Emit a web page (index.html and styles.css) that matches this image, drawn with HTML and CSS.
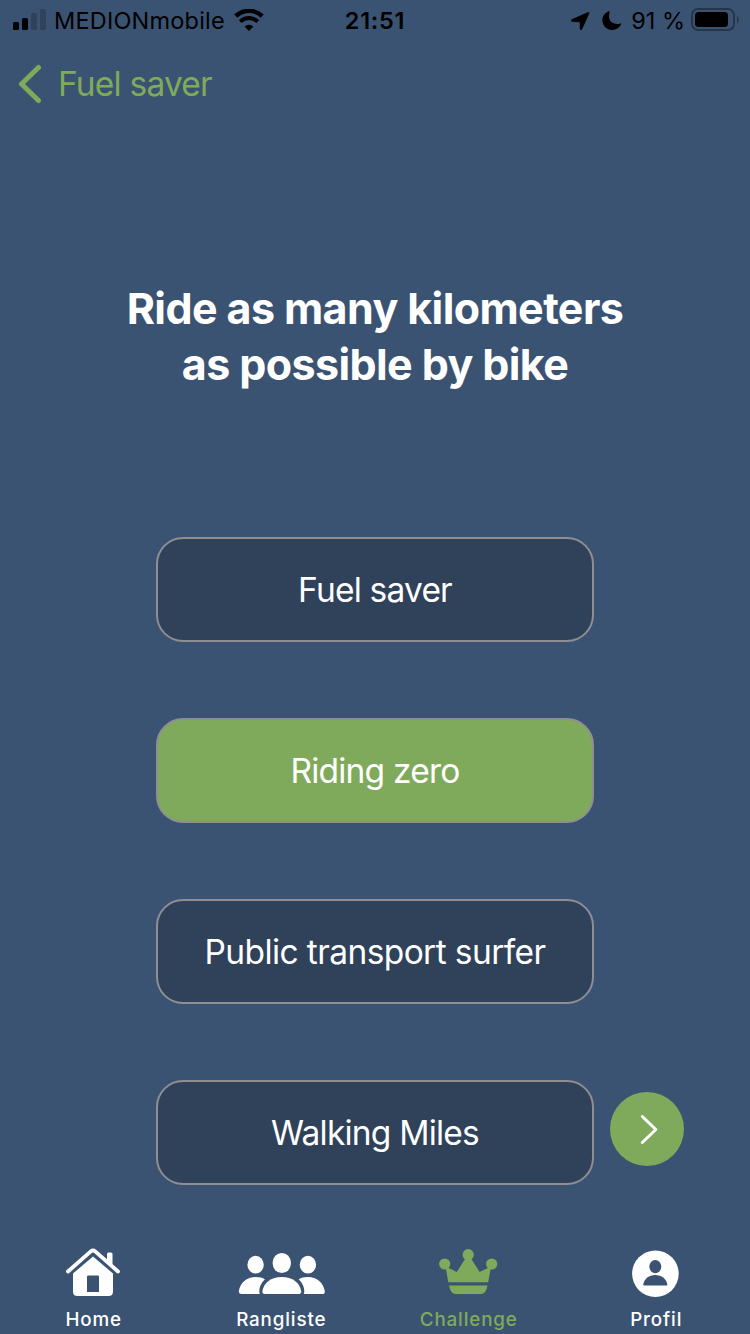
FILE: index.html
```html
<!DOCTYPE html>
<html lang="en">
<head>
    <meta charset="UTF-8">
    <meta name="viewport" content="width=device-width, initial-scale=1.0">
    <title>Challenge</title>
    <link rel="stylesheet" href="styles.css">
</head>
<body>
    <div class="statusbar">
        <div class="status-left">
            <svg class="signal" width="34" height="22" viewBox="0 0 34 22">
                <rect x="0" y="13" width="6" height="8" rx="1.5"/>
                <rect x="9" y="9" width="6" height="12" rx="1.5"/>
                <rect x="18" y="4" width="6" height="17" rx="1.5" fill="#2f425a"/>
                <rect x="27" y="0" width="6" height="21" rx="1.5" fill="#2f425a"/>
            </svg>
            <span class="carrier">MEDIONmobile</span>
            <svg class="wifi" width="30" height="22" viewBox="0 0 30 22">
                <path d="M1.8 7.2a19 19 0 0 1 26.4 0" fill="none" stroke="#000" stroke-width="4.4"/>
                <path d="M6.3 12.6a12.4 12.4 0 0 1 17.4 0" fill="none" stroke="#000" stroke-width="4"/>
                <path d="M10.6 17.6a6.3 6.3 0 0 1 8.8 0L15 22z"/>
            </svg>
        </div>
        <div class="clock">21:51</div>
        <div class="status-right">
            <svg class="location" width="19" height="18" viewBox="0 0 19 18">
                <path d="M17.2.3.8 7.6c-1 .5-.7 2 .2 2l8 .3v7c0 1.2 1.400 1.400 1.900.3L18 1.3c.3-.7-.2-1.300-.8-1z" stroke="#000" stroke-width=".5"/>
            </svg>
            <svg class="moon" width="20" height="20" viewBox="0 0 20 20">
                <path d="M6.2.4C2.600 2 .4 5.400.4 9.200c0 5.500 4.300 9.700 9.900 9.700 4 0 7.300-2.200 8.800-5.600.3-.8-.2-1.200-.9-.9-1 .4-2 .5-3.100.5-5 0-8.100-3-8.100-7.900 0-1.200.2-2.500.6-3.600.3-.8-.4-1.400-1.400-1z"/>
            </svg>
            <span class="percent">91 %</span>
            <svg class="battery" width="49" height="24" viewBox="0 0 49 24">
                <rect x="1" y="1" width="42" height="21" rx="6" fill="none" stroke="#263547" stroke-width="2"/>
                <rect x="4" y="4" width="33" height="15" rx="3.5"/>
                <path d="M46 8q1.800 1.200 1.800 3.500T46 15z" fill="#263547"/>
            </svg>
        </div>
    </div>

    <div class="navbar">
        <svg class="back" width="24" height="40" viewBox="0 0 24 40">
            <path d="M20.5 3.5 3.5 20l17 16.500" fill="none" stroke="#80aa5b" stroke-width="5" stroke-linecap="round" stroke-linejoin="round"/>
        </svg>
        <span class="back-text">Fuel saver</span>
    </div>

    <h1 class="title">Ride as many kilometers<br>as possible by bike</h1>

    <div class="challenges">
        <button class="challenge fuel">Fuel saver</button>
        <button class="challenge riding active">Riding zero</button>
        <button class="challenge transport">Public transport surfer</button>
        <button class="challenge walking">Walking Miles</button>
        <button class="next" aria-label="Next">
            <svg width="74" height="74" viewBox="0 0 74 74">
                <path d="M32.300 24.500 45.800 37.500 32.300 50.500" fill="none" stroke="#fff" stroke-width="3" stroke-linecap="round" stroke-linejoin="round"/>
            </svg>
        </button>
    </div>

    <div class="tabbar">
        <div class="tab">
            <svg width="56" height="50" viewBox="0 0 56 50">
                <path d="M2 23.500 24.800 3.400q2.200-1.800 4.400 0L52 23.500" fill="none" stroke="currentColor" stroke-width="3.800" stroke-linecap="round"/>
                <path d="M41 12V6q0-1.500 1.500-1.500H45q1.500 0 1.500 1.500v11z"/>
                <path fill-rule="evenodd" d="M27 8.500 47 25.500V43.500q0 4.500-4.500 4.500h-31Q7 48 7 43.500V25.500zM22.200 27.500q-1.200 0-1.200 1.200V44h12V28.700q0-1.200-1.200-1.200z"/>
            </svg>
            <span class="tab-text">Home</span>
        </div>
        <div class="tab">
            <svg width="88" height="50" viewBox="-0.600 0 88 50">
                <ellipse cx="18" cy="16.700" rx="8.200" ry="8.900"/>
                <ellipse cx="70.300" cy="16.700" rx="8.200" ry="8.900"/>
                <ellipse cx="44.200" cy="15" rx="9.200" ry="10.100"/>
                <path d="M3.500 46Q1 46 1.200 43.200C2.500 35 9 29 18.300 29c3.700 0 6.700.8 9 2.200-3.700 3.500-5.600 7.500-5.600 12 0 1.200.2 2 .5 2.800z"/>
                <path d="M84.900 46q2.500 0 2.300-2.800C85.900 35 79.400 29 70.100 29c-3.700 0-6.700.8-9 2.200 3.700 3.500 5.600 7.500 5.600 12 0 1.200-.2 2-.5 2.800z"/>
                <path d="M27.500 46q-2.900 0-2.700-2.800C26 35 33.500 29 44.200 29S62.400 35 63.600 43.200Q63.800 46 60.900 46z"/>
            </svg>
            <span class="tab-text">Rangliste</span>
        </div>
        <div class="tab active">
            <svg width="60" height="50" viewBox="1 0 60 50">
                <circle cx="6.700" cy="16" r="5.600"/>
                <circle cx="30.200" cy="6.700" r="5.600"/>
                <circle cx="53.700" cy="16" r="5.600"/>
                <path d="M7.500 18.500 18.800 24 28.300 9h3.800L41.600 24 53 18.500 50.200 34.300H10.300z"/>
                <path d="M11 37.500H49.500L48.500 41Q47 46 42.500 46H18Q13.500 46 12 41z"/>
            </svg>
            <span class="tab-text">Challenge</span>
        </div>
        <div class="tab">
            <svg width="48" height="50" viewBox="1 0 48 50">
                <circle cx="24.400" cy="25.700" r="23.300"/>
                <ellipse cx="24.300" cy="18.600" rx="6" ry="6.600" fill="#3b5372"/>
                <path d="M13.300 37.600q-1-.1-1-1.300C13.300 30.800 18 27 24.300 27s11 3.800 12 9.300q0 1.200-1 1.300z" fill="#3b5372"/>
            </svg>
            <span class="tab-text">Profil</span>
        </div>
    </div>
</body>
</html>
```
FILE: styles.css
```css
body {
    margin: 0;
    height: 1334px;
    display: flex;
    flex-direction: column;
    background-color: #3b5372;
    font-family: Inter, "Liberation Sans", sans-serif;
    color: white;
}
svg {
    display: block;
    flex: none;
    fill: currentColor;
}
.statusbar {
    height: 40px;
    display: grid;
    grid-template-columns: 1fr auto 1fr;
    color: black;
    font-size: 23.5px;
    line-height: 42px;
    white-space: nowrap;
}
.status-left, .status-right {
    display: flex;
    align-items: flex-start;
}
.status-left {
    padding-left: 13px;
}
.status-right {
    justify-content: flex-end;
    padding-right: 10px;
}
.signal {
    margin-top: 9px;
}
.carrier {
    margin-left: 7px;
    letter-spacing: 0.2px;
}
.wifi {
    margin: 9px 0 0 9px;
}
.clock {
    font-weight: 600;
    letter-spacing: 0.7px;
}
.location {
    margin: 12px 12px 0 0;
}
.moon {
    margin: 11px 9px 0 0;
}
.battery {
    margin: 8px 0 0 6px;
}
.navbar {
    height: 88px;
    display: flex;
    align-items: center;
    padding-left: 18px;
    color: #80aa5b;
    font-size: 33.5px;
    letter-spacing: -0.8px;
}
.back-text {
    margin-left: 16px;
}
.title {
    margin: 152px 0 0;
    text-align: center;
    font-size: 43px;
    font-weight: 700;
    line-height: 56px;
    letter-spacing: -0.6px;
}
.challenges {
    margin-top: 145px;
    display: grid;
    grid-template-columns: 1fr 438px 1fr;
    grid-auto-rows: 105px;
    row-gap: 76px;
}
.challenge {
    grid-column: 2;
    box-sizing: border-box;
    padding: 0;
    border: 2px solid #8e8e93;
    border-radius: 27px;
    background-color: #2f425a;
    color: white;
    font-family: inherit;
    font-size: 33.5px;
    letter-spacing: -0.8px;
    white-space: nowrap;
}
.challenge.active {
    background-color: #80aa5b;
}
.challenge.transport {
    letter-spacing: -0.6px;
}
.next {
    grid-column: 3;
    grid-row: 4;
    width: 74px;
    height: 74px;
    margin: 12px 0 0 16px;
    padding: 0;
    border: none;
    border-radius: 50%;
    background-color: #80aa5b;
}
.tabbar {
    margin-top: auto;
    height: 86px;
    display: grid;
    grid-template-columns: repeat(4, 1fr);
}
.tab {
    display: flex;
    flex-direction: column;
    align-items: center;
}
.tab.active {
    color: #80aa5b;
}
.tab-text {
    margin-top: 10px;
    font-size: 18.8px;
    font-weight: 500;
    line-height: 24px;
    letter-spacing: 0.85px;
}
```
